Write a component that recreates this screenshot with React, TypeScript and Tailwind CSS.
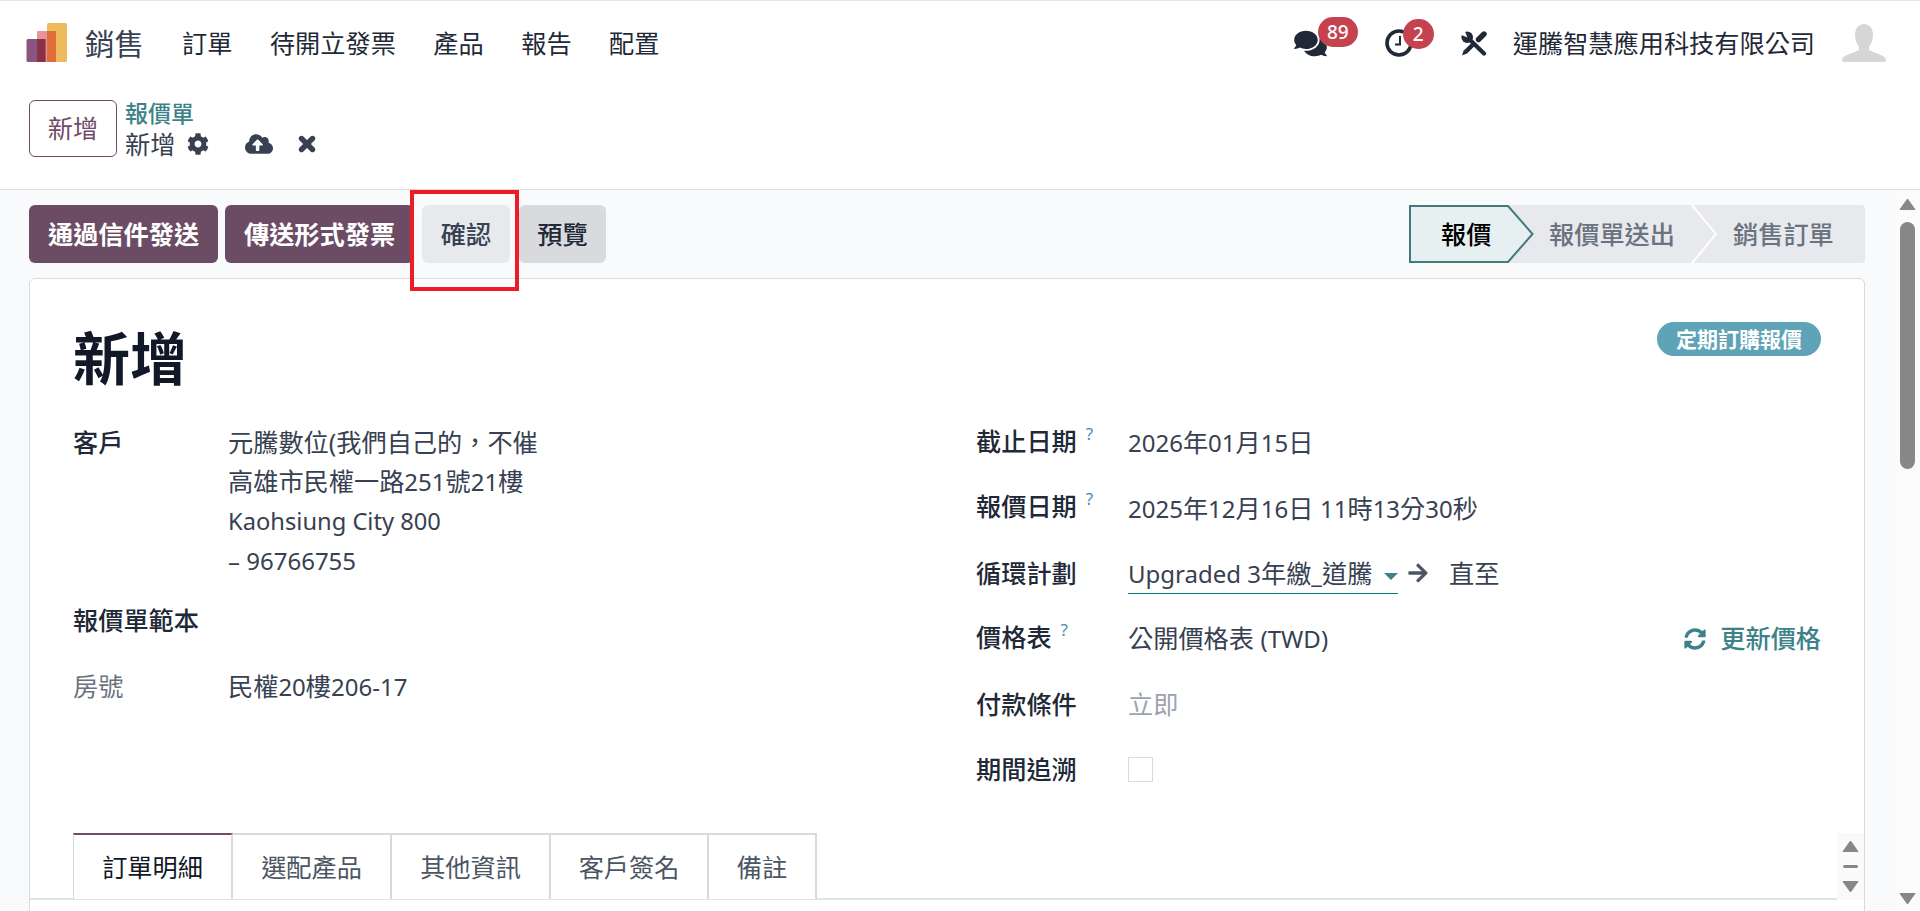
import React from 'react';
import { FaArrowRight, FaCloudUploadAlt, FaCog, FaComments, FaSyncAlt } from 'react-icons/fa';

const navItems = ['訂單', '待開立發票', '產品', '報告', '配置'];
const tabs = [
  { label: '訂單明細', width: 'w-[160px]' },
  { label: '選配產品', width: 'w-[159px]' },
  { label: '其他資訊', width: 'w-[159px]' },
  { label: '客戶簽名', width: 'w-[158px]' },
  { label: '備註', width: 'w-[108px]' },
];

function Logo() {
  return (
    <svg width="42" height="40" viewBox="0 0 42 40" className="shrink-0">
      <rect x="21" y="0" width="20" height="39" rx="1.5" fill="#edbb5c" />
      <rect x="11" y="8" width="19" height="31" rx="1" fill="#e8959a" />
      <rect x="21" y="8" width="9" height="31" fill="#e26d3a" />
      <rect x="0.5" y="16" width="19" height="23" rx="1.5" fill="#8b5582" />
      <rect x="11" y="16" width="8.5" height="23" fill="#8a3148" />
    </svg>
  );
}

function Avatar() {
  return (
    <svg width="44" height="38" viewBox="0 0 44 38">
      <path
        d="M22 0c-6 0-9 5-9 11 0 5 2 9 4 12v3c-5 3-17 5-17 10 0 1 1 2 2 2h40c1 0 2-1 2-2 0-5-12-7-17-10v-3c2-3 4-7 4-12 0-6-3-11-9-11z"
        fill="#d6d6d6"
      />
    </svg>
  );
}

function ClockIcon() {
  return (
    <svg width="28" height="28" viewBox="0 0 28 28" className="block">
      <circle cx="14" cy="14" r="12" fill="none" stroke="#1f2937" strokeWidth="3.6" />
      <path d="M15 7v8.5H10" fill="none" stroke="#1f2937" strokeWidth="2" />
    </svg>
  );
}

function ToolsIcon() {
  return (
    <svg width="26" height="25" viewBox="0 0 26 25" className="block">
      <path d="M7 7L23 22.5" stroke="#1f2937" strokeWidth="4.2" strokeLinecap="round" />
      <circle cx="6.2" cy="6.2" r="5.8" fill="#1f2937" />
      <path d="M6.4 6.4L-1 3.4 3.4 -1z" fill="#ffffff" />
      <path d="M23 3L17.5 8.5" stroke="#1f2937" strokeWidth="5.4" strokeLinecap="round" />
      <path d="M11.5 14L5 20.5" stroke="#1f2937" strokeWidth="4.4" />
      <path d="M7 22L1 24.6 3 18.4z" fill="#1f2937" />
    </svg>
  );
}

function CloseIcon() {
  return (
    <svg width="18" height="18" viewBox="0 0 18 18" className="ml-[25px]">
      <path d="M3.5 3.5L14.5 14.5M14.5 3.5L3.5 14.5" stroke="#374151" strokeWidth="5.4" strokeLinecap="round" />
    </svg>
  );
}

function Badge({ text, className }: { text: string; className: string }) {
  return (
    <span className={`absolute h-[30px] rounded-full bg-[#c4434f] text-white text-[19px] font-medium leading-[30px] text-center ${className}`}>
      {text}
    </span>
  );
}

function Help() {
  return <span className="ml-[9px] text-[17px] text-[#4b8db0] font-normal relative top-[-11px]">?</span>;
}

// latin and digits render slightly smaller than the cjk text in this shot
function L({ children }: { children: React.ReactNode }) {
  return <span className="text-[24px]">{children}</span>;
}

function Triangle({ down, className }: { down?: boolean; className?: string }) {
  return (
    <svg width="17" height="13" viewBox="0 0 17 13" className={className}>
      <path d={down ? 'M1 1.5h15L8.5 12z' : 'M1 11.5h15L8.5 1z'} fill="#878787" stroke="#878787" strokeLinejoin="round" />
    </svg>
  );
}

function Row({ label, help, children }: { label: string; help?: boolean; children: React.ReactNode }) {
  return (
    <div className="flex items-center h-[65.4px]">
      <div className="w-[152px] shrink-0 font-medium text-[#1f2937] whitespace-nowrap">
        {label}
        {help && <Help />}
      </div>
      <div className="flex-1 flex items-center">{children}</div>
    </div>
  );
}

export default function App() {
  return (
    <div className="w-[1920px] h-[911px] overflow-hidden flex flex-col bg-white text-[25.2px] leading-[39px] text-[#374151] font-[Noto_Sans,Noto_Sans_CJK_TC,sans-serif] relative">
      <div className="h-px bg-[#e7e5ee] shrink-0" />

      <header className="h-[84px] shrink-0 flex items-center pl-[26px] pr-[34px] text-[#1f2937]">
        <Logo />
        <span className="ml-[17px] text-[29.5px] text-[#374151]">銷售</span>
        <nav className="ml-[38px] flex gap-[37.5px]">
          {navItems.map((item) => (
            <span key={item}>{item}</span>
          ))}
        </nav>
        <div className="ml-auto flex items-center">
          <span className="relative mr-[58px]">
            <FaComments className="w-[33px] h-[29px] text-[#1f2937]" />
            <Badge text="89" className="w-[40px] top-[-12px] right-[-31px]" />
          </span>
          <span className="relative mr-[48px]">
            <ClockIcon />
            <Badge text="2" className="w-[31px] top-[-10px] right-[-21px]" />
          </span>
          <ToolsIcon />
          <span className="ml-[26px] mr-[27px]">運騰智慧應用科技有限公司</span>
          <Avatar />
        </div>
      </header>

      <div className="h-[105px] shrink-0 border-b border-[#d8dadd] pl-[29px] pt-[15px] flex items-start">
        <button className="w-[88px] h-[57px] rounded-[6px] border border-[#714b67] text-[#714b67]">新增</button>
        <div className="ml-[8px] mt-[-3px]">
          <div className="text-[#3c8288] text-[23px] leading-[32px] font-medium">報價單</div>
          <div className="flex items-center leading-[30px] text-[#374151]">
            <span>新增</span>
            <FaCog className="ml-[12px] w-[22px] h-[22px] text-[#374151]" />
            <FaCloudUploadAlt className="ml-[36px] w-[28px] h-[24px] text-[#374151]" />
            <CloseIcon />
          </div>
        </div>
      </div>

      <div className="flex-1 min-h-0 flex bg-[#f9fafb]">
        <main className="flex-1 min-w-0 pl-[29px] pr-[29px] pt-[15px] overflow-hidden">
          <div className="flex items-start h-[58px]">
            <div className="flex">
              <button className="w-[189px] h-[58px] rounded-[6px] bg-[#6b4c64] text-white font-semibold">通過信件發送</button>
              <button className="ml-[7px] w-[189px] h-[58px] rounded-[6px] bg-[#6b4c64] text-white font-semibold">傳送形式發票</button>
              <button className="ml-[8px] w-[88px] h-[58px] rounded-[6px] bg-[#e7e9ed] font-medium text-[#374151]">確認</button>
              <button className="ml-[9px] w-[87px] h-[58px] rounded-[6px] bg-[#d8dadd] font-medium text-[#1f2937]">預覽</button>
            </div>
            <div className="ml-auto relative w-[456px] h-[58px] rounded-[4px] bg-[#e7e9ed] flex items-center font-medium text-[#6b7280]">
              <svg width="456" height="58" viewBox="0 0 456 58" className="absolute inset-0">
                <path d="M1 1H99L123.5 29L99 57H1z" fill="#e6f0f1" stroke="#41797d" strokeWidth="2" />
                <path d="M283 0L307 29L283 58" fill="none" stroke="#ffffff" strokeWidth="2" />
              </svg>
              <span className="relative w-[140px] pl-[32px] text-black">報價</span>
              <span className="relative w-[184px]">報價單送出</span>
              <span className="relative">銷售訂單</span>
            </div>
          </div>

          <div className="mt-[15px] h-[700px] rounded-t-[6px] border border-[#d8dadd] bg-white">
            <div className="px-[43px] pt-[43px]">
              <div className="flex items-start justify-between h-[74px]">
                <h1 className="text-[57px] leading-[72px] font-semibold text-[#111827]">新增</h1>
                <span className="w-[164px] h-[34px] rounded-full bg-[#5fa3b7] text-white text-[21px] leading-[34px] font-semibold text-center">定期訂購報價</span>
              </div>
              <div className="flex">
                <div className="w-[903px] shrink-0 pt-[27px]">
                  <div className="flex">
                    <div className="w-[155px] font-medium text-[#1f2937]">客戶</div>
                    <div>
                      <div>元騰數位(我們自己的，不催</div>
                      <div>高雄市民權一路<L>251</L>號<L>21</L>樓</div>
                      <div><span className="text-[23.7px]">Kaohsiung City 800</span></div>
                      <div><L>– 96766755</L></div>
                    </div>
                  </div>
                  <div className="mt-[21px] font-medium text-[#1f2937]">報價單範本</div>
                  <div className="mt-[27px] flex">
                    <div className="w-[155px] text-[#6b7280]">房號</div>
                    <div>民權<L>20</L>樓<L>206-17</L></div>
                  </div>
                </div>
                <div className="flex-1 pt-[14px]">
                  <Row label="截止日期" help><span><L>2026</L>年<L>01</L>月<L>15</L>日</span></Row>
                  <Row label="報價日期" help><span><L>2025</L>年<L>12</L>月<L>16</L>日 <L>11</L>時<L>13</L>分<L>30</L>秒</span></Row>
                  <Row label="循環計劃">
                    <div className="w-[270px] h-[40px] border-b border-[#017e84] flex items-center justify-between mt-[2px]">
                      <span className="whitespace-nowrap"><L>Upgraded 3</L>年繳<L>_</L>道騰</span>
                      <span className="w-0 h-0 border-x-[7px] border-x-transparent border-t-[7px] border-t-[#3c8288] mt-[6px]" />
                    </div>
                    <FaArrowRight className="ml-[9px] w-[22px] h-[22px] text-[#4b5563]" />
                    <span className="ml-[20px]">直至</span>
                  </Row>
                  <Row label="價格表" help>
                    <span>公開價格表 <L>(TWD)</L></span>
                    <span className="ml-auto flex items-center text-[#3c8288] font-medium">
                      <FaSyncAlt className="w-[22px] h-[22px] mr-[14px]" />
                      更新價格
                    </span>
                  </Row>
                  <Row label="付款條件"><span className="text-[#9ca3af]">立即</span></Row>
                  <Row label="期間追溯"><span className="block w-[25px] h-[25px] border border-[#d8dadd]" /></Row>
                </div>
              </div>
            </div>
            <div className="mt-[31px] flex">
              <div className="flex-1 h-[67px] border-b-2 border-[#e2e3e6] pl-[43px] flex">
                {tabs.map((tab, i) => (
                  <div
                    key={tab.label}
                    className={`${tab.width} h-[66px] flex items-center justify-center bg-white border-r-2 border-[#d8dadd] ${i === 0 ? 'border-l border-t-2 border-t-[#714b67] text-[#111827]' : 'border-t-2 text-[#4b5563]'}`}
                  >
                    {tab.label}
                  </div>
                ))}
              </div>
              <div className="w-[27px] h-[67px] bg-[#fafafa] flex flex-col items-center pt-[7px]">
                <Triangle />
                <span className="block mt-[12px] w-[15px] h-[3px] rounded-full bg-[#878787]" />
                <Triangle down className="mt-[12px]" />
              </div>
            </div>
          </div>
        </main>

        <aside className="w-[26px] shrink-0 bg-[#fbfbfb] flex flex-col items-center pt-[8px] pb-[6px]">
          <Triangle />
          <div className="mt-[11px] w-[15px] h-[247px] rounded-full bg-[#878787]" />
          <Triangle down className="mt-auto" />
        </aside>
      </div>

      {/* red highlight from the tutorial screenshot */}
      <div className="absolute left-[410px] top-[190px] w-[109px] h-[101px] border-[4px] border-[#ee1c25] pointer-events-none" />
    </div>
  );
}
